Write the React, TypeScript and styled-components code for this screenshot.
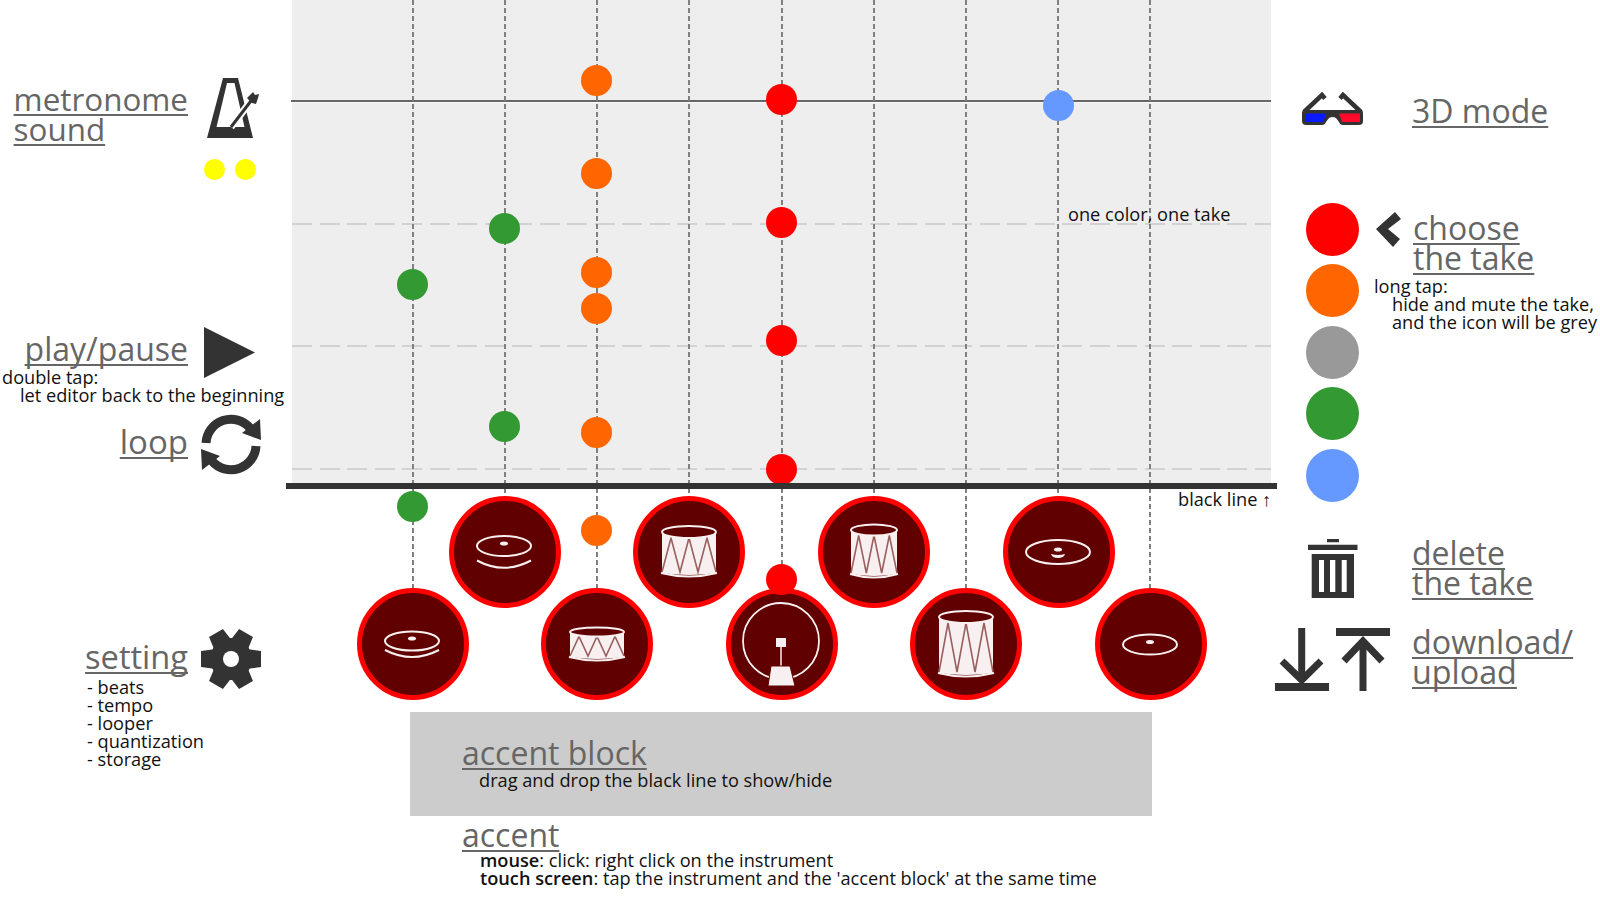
import React from "react";
import styled, { createGlobalStyle } from "styled-components";

const GlobalStyle = createGlobalStyle`
  html, body {
    margin: 0;
    background: #ffffff;
    overflow: hidden;
    font-family: "Open Sans", "Noto Sans", sans-serif;
  }
`;

const Page = styled.div`
  display: flex;
  width: 1600px;
  height: 900px;
  overflow: hidden;
`;

const LeftRail = styled.div`
  width: 292px;
  flex: none;
  padding-top: 77px;
`;

const Centre = styled.div`
  position: relative;
  width: 979px;
  flex: none;
`;

const RightRail = styled.div`
  flex: 1;
  padding-top: 92px;
`;

const LeftRow = styled.div<{ $mt: number; $h: number }>`
  display: flex;
  margin-top: ${(p) => p.$mt}px;
  height: ${(p) => p.$h}px;
`;

const LabelSlot = styled.div<{ $offset: number }>`
  width: 188px;
  flex: none;
  display: flex;
  justify-content: flex-end;
  padding-top: ${(p) => p.$offset}px;
`;

const IconSlot = styled.div<{ $gap: number }>`
  margin-left: ${(p) => p.$gap}px;
  flex: none;
`;

const Label = styled.div<{ $size?: number; $lh?: number }>`
  margin-top: 1.5px;
  font-size: ${(p) => p.$size ?? 32}px;
  line-height: ${(p) => p.$lh ?? 30.5}px;
  color: #666666;
  white-space: nowrap;

  span {
    text-decoration: underline;
    text-decoration-thickness: 2px;
    text-underline-offset: 2.5px;
    text-decoration-skip-ink: none;
  }
`;

const Note = styled.div<{ $left?: number; $indent?: number; $mt?: number }>`
  margin-left: ${(p) => p.$left ?? 0}px;
  margin-top: ${(p) => p.$mt ?? 0}px;
  padding-left: ${(p) => p.$indent ?? 0}px;
  font-size: 18.2px;
  line-height: 18px;
  color: #111111;
  white-space: nowrap;

  b {
    font-weight: 600;
  }
`;

const YellowDots = styled.div`
  display: flex;
  gap: 9.6px;
  margin: 14.5px 0 0 -3px;
`;

const YellowDot = styled.div`
  width: 21px;
  height: 21px;
  border-radius: 50%;
  background: #ffff00;
`;

const Board = styled.div`
  height: 486px;
  background: #eeeeee;
`;

const GridLine = styled.div<{ $y: number }>`
  position: absolute;
  left: 0;
  right: 0;
  top: ${(p) => p.$y}px;
  height: 2px;
  background: repeating-linear-gradient(to right, #d2d2d2 0 20px, transparent 20px 27.5px);
`;

const SolidLine = styled.div`
  position: absolute;
  left: -1px;
  right: 0;
  top: 100px;
  height: 2px;
  background: #666666;
  box-shadow: 0 1px 0 #f8f8f8;
`;

const BlackLine = styled.div`
  position: absolute;
  left: -6px;
  right: -6px;
  top: 483px;
  height: 6px;
  background: #333333;
  z-index: 3;
`;

const BeatLine = styled.div<{ $x: number; $h: number }>`
  position: absolute;
  top: 0;
  left: ${(p) => p.$x - 1}px;
  width: 2px;
  height: ${(p) => p.$h}px;
  background: repeating-linear-gradient(to bottom, #808080 0 5px, transparent 5px 8px);
`;

const Dot = styled.div<{ $x: number; $y: number; $c: string }>`
  position: absolute;
  left: ${(p) => p.$x - 15.5}px;
  top: ${(p) => p.$y - 15.5}px;
  width: 31px;
  height: 31px;
  border-radius: 50%;
  background: ${(p) => p.$c};
  z-index: 2;
`;

const FloatNote = styled.div<{ $x: number; $y: number }>`
  position: absolute;
  left: ${(p) => p.$x}px;
  top: ${(p) => p.$y}px;
  font-size: 18.2px;
  line-height: 18px;
  color: #111111;
  white-space: nowrap;
  z-index: 2;
`;

const PadGrid = styled.div`
  position: relative;
  z-index: 1;
  display: grid;
  grid-template-columns: repeat(9, 92.3px);
  grid-template-rows: repeat(2, 92px);
  margin: 20px 0 0 74.4px;
`;

const Pad = styled.div<{ $col: number; $row: number }>`
  grid-column: ${(p) => p.$col};
  grid-row: ${(p) => p.$row};
  place-self: center;
  width: 112px;
  height: 112px;
  flex: none;
  box-sizing: border-box;
  border: 5.5px solid #ff0000;
  border-radius: 50%;
  background: #600000;
  overflow: hidden;

  svg {
    display: block;
    margin: -5.5px;
  }
`;

const AccentBlock = styled.div`
  box-sizing: border-box;
  width: 742px;
  height: 104px;
  margin: 22px 0 0 118px;
  padding: 24.5px 0 0 52px;
  background: #cccccc;
`;

const AccentHelp = styled.div`
  margin: 4px 0 0 170px;
`;

const RightRow = styled.div<{ $mt: number; $h: number }>`
  display: flex;
  margin-top: ${(p) => p.$mt}px;
  height: ${(p) => p.$h}px;
`;

const RightIcon = styled.div`
  width: 123px;
  flex: none;
  display: flex;
  justify-content: center;
  gap: 7px;
`;

const RightLabel = styled.div<{ $offset: number }>`
  margin: ${(p) => p.$offset}px 0 0 18px;
`;

const TakeGroup = styled.div`
  display: flex;
  margin-top: 78px;
`;

const TakeColumn = styled.div`
  width: 103px;
  flex: none;
  box-sizing: border-box;
  padding-left: 34.5px;
  display: flex;
  flex-direction: column;
  gap: 8.4px;
`;

const TakeDot = styled.div<{ $c: string }>`
  width: 53px;
  height: 53px;
  border-radius: 50%;
  background: ${(p) => p.$c};
`;

const TakeHelp = styled.div`
  padding-top: 8px;
`;

const ChooseRow = styled.div`
  display: flex;
  gap: 12px;
  margin-left: 2px;

  svg {
    margin-top: 1px;
  }
`;

const Ink = "#333333";

function MetronomeIcon() {
  return (
    <svg width="52" height="62" viewBox="0 0 52 62">
      <path
        fillRule="evenodd"
        fill={Ink}
        d="M16 1H31L46 61H0ZM20 6L9.5 50H37.5L27.5 6Z"
      />
      <path d="M24 50L47 20" stroke="#ffffff" strokeWidth="7" />
      <path d="M24 50L47 20" stroke={Ink} strokeWidth="3" />
      <path d="M40 21L46 15L48 18L52 17L51 21L49 27L45 26Z" fill={Ink} />
    </svg>
  );
}

function PlayIcon() {
  return (
    <svg width="51" height="51" viewBox="0 0 51 51">
      <path d="M0 0L51 25.5L0 51Z" fill={Ink} />
    </svg>
  );
}

function LoopIcon() {
  return (
    <svg width="62" height="62" viewBox="0 0 62 62">
      <g>
        <path d="M6 29A25 25 0 0 1 50 14" fill="none" stroke={Ink} strokeWidth="9" />
        <path d="M60 5L61 26L42 19Z" fill={Ink} />
      </g>
      <g transform="rotate(180 31 30.5)">
        <path d="M6 29A25 25 0 0 1 50 14" fill="none" stroke={Ink} strokeWidth="9" />
        <path d="M60 5L61 26L42 19Z" fill={Ink} />
      </g>
    </svg>
  );
}

function GearIcon() {
  return (
    <svg width="62" height="62" viewBox="0 0 62 62">
      <circle cx="31" cy="31" r="21" fill={Ink} />
      {[0, 60, 120, 180, 240, 300].map((a) => (
        <path key={a} d="M46 21L61 23V39L46 41Z" fill={Ink} transform={`rotate(${a} 31 31)`} />
      ))}
      <circle cx="31" cy="31" r="8" fill="#ffffff" />
    </svg>
  );
}

function GlassesIcon() {
  return (
    <svg width="61" height="33" viewBox="0 0 61 33">
      <path d="M2 20L20 3L23 6.5" fill="none" stroke={Ink} strokeWidth="4.5" />
      <path d="M59 20L41 3L38 6.5" fill="none" stroke={Ink} strokeWidth="4.5" />
      <path
        d="M3 18H58Q61 18 61 21V29Q61 33 57 33H41Q38 33 37 30L34 26Q30.5 24 27 26L24 30Q23 33 20 33H4Q0 33 0 29V21Q0 18 3 18Z"
        fill={Ink}
      />
      <path d="M3 21.5H24L21.5 30H3Z" fill="#0a1aff" />
      <path d="M37 21.5H58V30H40Z" fill="#ff0a2a" />
    </svg>
  );
}

function ChevronIcon() {
  return (
    <svg width="25" height="35" viewBox="0 0 25 35">
      <path d="M0 17L19 0L25 7L12 17L24 27L17 35Z" fill={Ink} />
    </svg>
  );
}

function TrashIcon() {
  return (
    <svg width="50" height="60" viewBox="0 0 50 60">
      <path
        fill={Ink}
        fillRule="evenodd"
        d="M19 0H31V3.3H19ZM0 5.7H49.5V11H0ZM3.7 15H46V59H3.7ZM11 21V53H16V21ZM22 21V53H27.3V21ZM33.7 21V53H38.7V21Z"
      />
    </svg>
  );
}

function DownloadIcon() {
  return (
    <svg width="54" height="63" viewBox="0 0 54 63">
      <path d="M26.7 0V50" stroke={Ink} strokeWidth="7" />
      <path d="M7 33L26.7 52L46 33" fill="none" stroke={Ink} strokeWidth="7" />
      <rect x="0" y="55" width="54" height="8" fill={Ink} />
    </svg>
  );
}

function UploadIcon() {
  return (
    <svg width="54" height="63" viewBox="0 0 54 63">
      <rect x="0" y="0" width="54" height="8" fill={Ink} />
      <path d="M27 13V63" stroke={Ink} strokeWidth="7" />
      <path d="M8 33L27 13L46 33" fill="none" stroke={Ink} strokeWidth="7" />
    </svg>
  );
}

const white = "#f8f0f0";

// cymbal seen from the side, y values are relative to the pad centre
function Cymbal(props: { y: number; rx: number; ry: number; arc?: [number, number]; stem?: boolean }) {
  const { y, rx, ry, arc, stem } = props;
  return (
    <svg width="112" height="112" viewBox="-56 -56 112 112">
      <ellipse cx="0" cy={y} rx={rx} ry={ry} fill="none" stroke={white} strokeWidth="2" />
      <ellipse cx="0" cy={y - 2.5} rx="4" ry="2" fill={white} />
      {arc && (
        <path
          d={`M${-rx} ${arc[0]}Q0 ${arc[1]} ${rx} ${arc[0]}`}
          fill="none"
          stroke={white}
          strokeWidth="2"
        />
      )}
      {stem && <path d="M-7 2Q0 4 7 2Q6 6 0 6Q-6 6 -7 2Z" fill={white} />}
    </svg>
  );
}

function Drum(props: { rx: number; top: number; bottom: number; ry: number; zig: number }) {
  const { rx, top, bottom, ry, zig } = props;
  const points: string[] = [];
  for (let i = 0; i <= zig; i++) {
    const x = -rx + (i * 2 * rx) / zig;
    points.push(`${x} ${i % 2 === 0 ? bottom - 1 : top + ry}`);
  }
  return (
    <svg width="112" height="112" viewBox="-56 -56 112 112">
      <path
        d={`M${-rx} ${top}V${bottom}Q0 ${bottom + 4} ${rx} ${bottom}V${top}Z`}
        fill={white}
      />
      <polyline points={points.join(" ")} fill="none" stroke="#9a6060" strokeWidth="1.6" />
      <ellipse cx="0" cy={top} rx={rx} ry={ry} fill="#600000" stroke={white} strokeWidth="2" />
      <path
        d={`M${-rx - 1} ${bottom}Q0 ${bottom + 7} ${rx + 1} ${bottom}`}
        fill="none"
        stroke={white}
        strokeWidth="2"
      />
    </svg>
  );
}

function BassDrum() {
  return (
    <svg width="112" height="112" viewBox="-56 -56 112 112">
      <circle cx="0" cy="-3" r="38" fill="none" stroke={white} strokeWidth="1.8" />
      <rect x="-5" y="-6" width="10" height="9" fill={white} />
      <path d="M0 3V22" stroke={white} strokeWidth="1.5" />
      <path d="M-10 22H9L14 42H-13Z" fill={white} stroke="#600000" strokeWidth="1" />
    </svg>
  );
}

const ORANGE = "#ff6600";
const RED = "#ff0000";
const GREEN = "#339933";
const BLUE = "#6699ff";

const beatLines = [
  { x: 121, h: 590 },
  { x: 213.15, h: 497 },
  { x: 305.3, h: 590 },
  { x: 397.45, h: 497 },
  { x: 489.6, h: 570 },
  { x: 581.75, h: 497 },
  { x: 673.9, h: 590 },
  { x: 766.05, h: 497 },
  { x: 858.2, h: 590 },
];

const hits = [
  { x: 304.8, y: 80.5, c: ORANGE },
  { x: 304.8, y: 173.5, c: ORANGE },
  { x: 304.8, y: 272, c: ORANGE },
  { x: 304.8, y: 308.5, c: ORANGE },
  { x: 304.8, y: 432.5, c: ORANGE },
  { x: 304.8, y: 530, c: ORANGE },
  { x: 489.1, y: 99, c: RED },
  { x: 489.1, y: 222.5, c: RED },
  { x: 489.1, y: 340, c: RED },
  { x: 489.1, y: 469, c: RED },
  { x: 489.1, y: 579, c: RED },
  { x: 766, y: 105, c: BLUE },
  { x: 120.1, y: 284.5, c: GREEN },
  { x: 120.1, y: 506.5, c: GREEN },
  { x: 212.1, y: 228.5, c: GREEN },
  { x: 212.1, y: 426.5, c: GREEN },
];

export default function App() {
  return (
    <Page>
      <GlobalStyle />
      <LeftRail>
        <LeftRow $mt={0} $h={102}>
          <LabelSlot $offset={5}>
            <Label $size={31.4}>
              <span>metronome</span>
              <br />
              <span>sound</span>
            </Label>
          </LabelSlot>
          <IconSlot $gap={19}>
            <MetronomeIcon />
            <YellowDots>
              <YellowDot />
              <YellowDot />
            </YellowDots>
          </IconSlot>
        </LeftRow>
        <LeftRow $mt={148} $h={41}>
          <LabelSlot $offset={5}>
            <Label>
              <span>play/pause</span>
            </Label>
          </LabelSlot>
          <IconSlot $gap={16}>
            <PlayIcon />
          </IconSlot>
        </LeftRow>
        <Note $left={2}>double tap:</Note>
        <Note $left={2} $indent={18}>
          let editor back to the beginning
        </Note>
        <LeftRow $mt={10} $h={61}>
          <LabelSlot $offset={11.5}>
            <Label $size={33}>
              <span>loop</span>
            </Label>
          </LabelSlot>
          <IconSlot $gap={12}>
            <LoopIcon />
          </IconSlot>
        </LeftRow>
        <LeftRow $mt={153} $h={50}>
          <LabelSlot $offset={12}>
            <Label $size={32.6}>
              <span>setting</span>
            </Label>
          </LabelSlot>
          <IconSlot $gap={12}>
            <GearIcon />
          </IconSlot>
        </LeftRow>
        <Note $left={87}>- beats</Note>
        <Note $left={87}>- tempo</Note>
        <Note $left={87}>- looper</Note>
        <Note $left={87}>- quantization</Note>
        <Note $left={87}>- storage</Note>
      </LeftRail>

      <Centre>
        <Board />
        <SolidLine />
        <GridLine $y={222.5} />
        <GridLine $y={345} />
        <GridLine $y={467.5} />
        {beatLines.map((l) => (
          <BeatLine key={l.x} $x={l.x} $h={l.h} />
        ))}
        <BlackLine />
        {hits.map((h) => (
          <Dot key={`${h.x}-${h.y}`} $x={h.x} $y={h.y} $c={h.c} />
        ))}
        <FloatNote $x={776} $y={205}>
          one color, one take
        </FloatNote>
        <FloatNote $x={886} $y={490}>
          black line ↑
        </FloatNote>

        <PadGrid>
          <Pad $col={2} $row={1}>
            <Cymbal y={-6} rx={27} ry={10} arc={[8.5, 23]} />
          </Pad>
          <Pad $col={4} $row={1}>
            <Drum rx={27} top={-20} bottom={21} ry={6} zig={6} />
          </Pad>
          <Pad $col={6} $row={1}>
            <Drum rx={23} top={-22} bottom={22} ry={5.5} zig={6} />
          </Pad>
          <Pad $col={8} $row={1}>
            <Cymbal y={0} rx={32} ry={12} stem />
          </Pad>
          <Pad $col={1} $row={2}>
            <Cymbal y={-3} rx={27} ry={9.5} arc={[6, 20]} />
          </Pad>
          <Pad $col={3} $row={2}>
            <Drum rx={27} top={-12} bottom={13} ry={4.5} zig={6} />
          </Pad>
          <Pad $col={5} $row={2}>
            <BassDrum />
          </Pad>
          <Pad $col={7} $row={2}>
            <Drum rx={27} top={-27} bottom={29} ry={6} zig={6} />
          </Pad>
          <Pad $col={9} $row={2}>
            <Cymbal y={0.5} rx={27} ry={10} />
          </Pad>
        </PadGrid>

        <AccentBlock>
          <Label>
            <span>accent block</span>
          </Label>
          <Note $indent={17} $mt={2.5}>
            drag and drop the black line to show/hide
          </Note>
        </AccentBlock>
        <AccentHelp>
          <Label>
            <span>accent</span>
          </Label>
          <Note $indent={18}>
            <b>mouse</b>: click: right click on the instrument
          </Note>
          <Note $indent={18}>
            <b>touch screen</b>: tap the instrument and the 'accent block' at the same time
          </Note>
        </AccentHelp>
      </Centre>

      <RightRail>
        <RightRow $mt={0} $h={33}>
          <RightIcon>
            <GlassesIcon />
          </RightIcon>
          <RightLabel $offset={2}>
            <Label>
              <span>3D mode</span>
            </Label>
          </RightLabel>
        </RightRow>
        <TakeGroup>
          <TakeColumn>
            <TakeDot $c={RED} />
            <TakeDot $c={ORANGE} />
            <TakeDot $c="#999999" />
            <TakeDot $c={GREEN} />
            <TakeDot $c={BLUE} />
          </TakeColumn>
          <TakeHelp>
            <ChooseRow>
              <ChevronIcon />
              <Label>
                <span>choose</span>
                <br />
                <span>the take</span>
              </Label>
            </ChooseRow>
            <Note $mt={3}>long tap:</Note>
            <Note $indent={18}>hide and mute the take,</Note>
            <Note $indent={18}>and the icon will be grey</Note>
          </TakeHelp>
        </TakeGroup>
        <RightRow $mt={37} $h={60}>
          <RightIcon>
            <TrashIcon />
          </RightIcon>
          <RightLabel $offset={-2.5}>
            <Label $lh={30}>
              <span>delete</span>
              <br />
              <span>the take</span>
            </Label>
          </RightLabel>
        </RightRow>
        <RightRow $mt={29} $h={63}>
          <RightIcon>
            <DownloadIcon />
            <UploadIcon />
          </RightIcon>
          <RightLabel $offset={-3.5}>
            <Label $size={32.3}>
              <span>download/</span>
              <br />
              <span>upload</span>
            </Label>
          </RightLabel>
        </RightRow>
      </RightRail>
    </Page>
  );
}
